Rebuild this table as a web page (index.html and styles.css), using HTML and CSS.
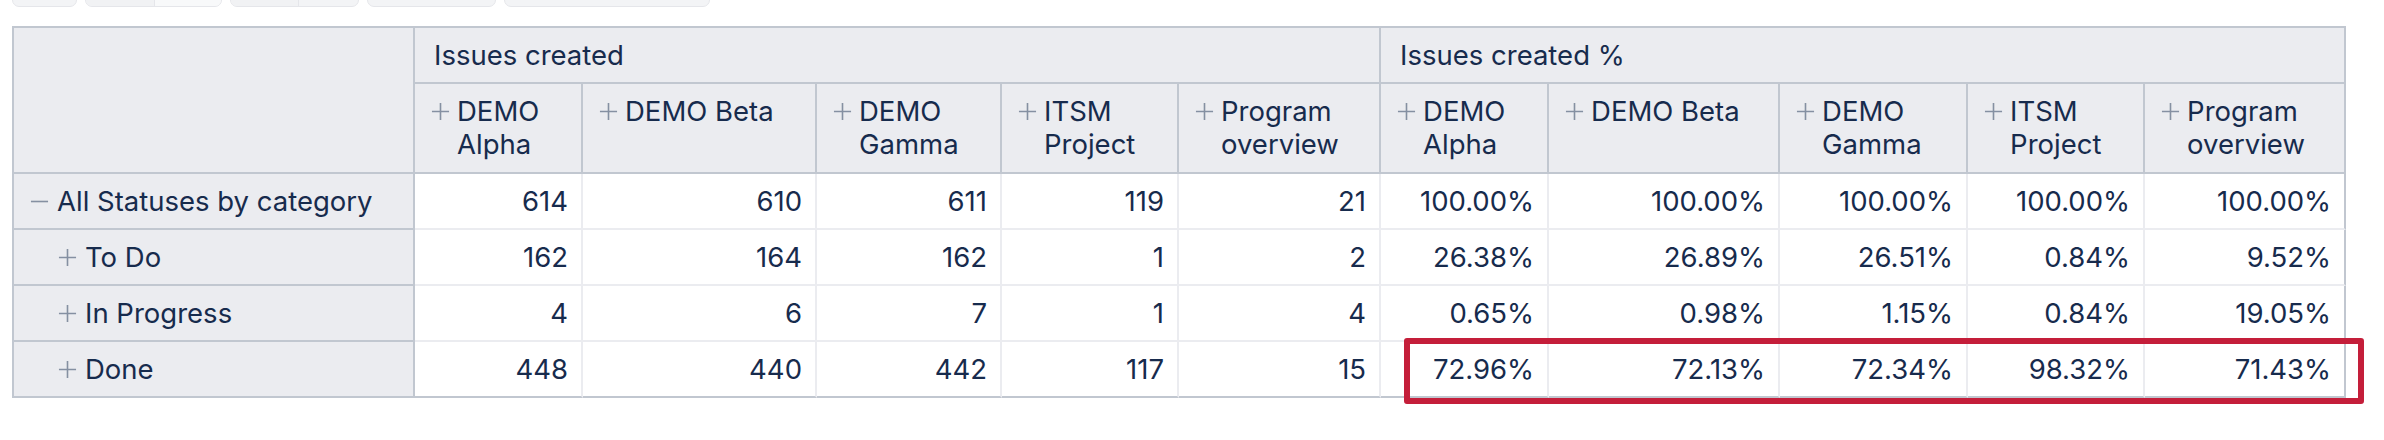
FILE: index.html
```html
<!DOCTYPE html>
<html lang="en">
<head>
<meta charset="utf-8">
<title>Issues created report</title>
<link rel="stylesheet" href="styles.css">
</head>
<body>
<div class="toolbar">
  <div class="btn w1"><span class="seg"></span></div>
  <div class="btn"><span class="seg s68 dark"></span><span class="seg s67 light"></span></div>
  <div class="btn"><span class="seg s67 dark"></span><span class="seg s62"></span></div>
  <div class="btn w4"><span class="seg"></span></div>
  <div class="btn w5"><span class="seg"></span></div>
</div>

<div class="wrap">
  <table class="pivot">
    <colgroup>
      <col class="c401"><col class="c168"><col class="c234"><col class="c185"><col class="c177"><col class="c202">
      <col class="c168"><col class="c231"><col class="c188"><col class="c177"><col class="c201">
    </colgroup>
    <thead>
      <tr class="top">
        <th rowspan="2" class="corner"></th>
        <th colspan="5" class="grp">Issues created</th>
        <th colspan="5" class="grp">Issues created %</th>
      </tr>
      <tr class="sub">
        <th><div class="hd"><span class="ico"><svg viewBox="0 0 20 20"><path d="M1 10H19M10 1V19"/></svg></span><span>DEMO Alpha</span></div></th>
        <th><div class="hd"><span class="ico"><svg viewBox="0 0 20 20"><path d="M1 10H19M10 1V19"/></svg></span><span>DEMO Beta</span></div></th>
        <th><div class="hd"><span class="ico"><svg viewBox="0 0 20 20"><path d="M1 10H19M10 1V19"/></svg></span><span>DEMO Gamma</span></div></th>
        <th><div class="hd"><span class="ico"><svg viewBox="0 0 20 20"><path d="M1 10H19M10 1V19"/></svg></span><span>ITSM Project</span></div></th>
        <th><div class="hd"><span class="ico"><svg viewBox="0 0 20 20"><path d="M1 10H19M10 1V19"/></svg></span><span>Program overview</span></div></th>
        <th><div class="hd"><span class="ico"><svg viewBox="0 0 20 20"><path d="M1 10H19M10 1V19"/></svg></span><span>DEMO Alpha</span></div></th>
        <th><div class="hd"><span class="ico"><svg viewBox="0 0 20 20"><path d="M1 10H19M10 1V19"/></svg></span><span>DEMO Beta</span></div></th>
        <th><div class="hd"><span class="ico"><svg viewBox="0 0 20 20"><path d="M1 10H19M10 1V19"/></svg></span><span>DEMO Gamma</span></div></th>
        <th><div class="hd"><span class="ico"><svg viewBox="0 0 20 20"><path d="M1 10H19M10 1V19"/></svg></span><span>ITSM Project</span></div></th>
        <th><div class="hd"><span class="ico"><svg viewBox="0 0 20 20"><path d="M1 10H19M10 1V19"/></svg></span><span>Program overview</span></div></th>
      </tr>
    </thead>
    <tbody>
      <tr>
        <td class="lbl"><div class="lb"><span class="ico"><svg viewBox="0 0 20 20"><path d="M1 10H19"/></svg></span><span>All Statuses by category</span></div></td>
        <td>614</td><td>610</td><td>611</td><td>119</td><td>21</td>
        <td>100.00%</td><td>100.00%</td><td>100.00%</td><td>100.00%</td><td>100.00%</td>
      </tr>
      <tr>
        <td class="lbl child"><div class="lb"><span class="ico"><svg viewBox="0 0 20 20"><path d="M1 10H19M10 1V19"/></svg></span><span>To Do</span></div></td>
        <td>162</td><td>164</td><td>162</td><td>1</td><td>2</td>
        <td>26.38%</td><td>26.89%</td><td>26.51%</td><td>0.84%</td><td>9.52%</td>
      </tr>
      <tr>
        <td class="lbl child"><div class="lb"><span class="ico"><svg viewBox="0 0 20 20"><path d="M1 10H19M10 1V19"/></svg></span><span>In Progress</span></div></td>
        <td>4</td><td>6</td><td>7</td><td>1</td><td>4</td>
        <td>0.65%</td><td>0.98%</td><td>1.15%</td><td>0.84%</td><td>19.05%</td>
      </tr>
      <tr class="last">
        <td class="lbl child"><div class="lb"><span class="ico"><svg viewBox="0 0 20 20"><path d="M1 10H19M10 1V19"/></svg></span><span>Done</span></div></td>
        <td>448</td><td>440</td><td>442</td><td>117</td><td>15</td>
        <td>72.96%</td><td>72.13%</td><td>72.34%</td><td>98.32%</td><td>71.43%</td>
      </tr>
    </tbody>
  </table>
  <div class="highlight"></div>
</div>
</body>
</html>
```

FILE: styles.css
```css
* { box-sizing: border-box; }

html, body { background: #ffffff; }

body {
  margin: 0;
  padding: 0 0 20px 12px;
  color: #172b4d;
  font-family: Inter, "Noto Sans", "Liberation Sans", sans-serif;
}

/* toolbar (only its bottom edge is visible) */
.toolbar {
  display: flex;
  align-items: flex-end;
  gap: 8px;
  height: 7px;
  overflow: hidden;
}
.btn {
  flex: none;
  display: flex;
  height: 40px;
  border: 1.5px solid #e5e6ea;
  border-radius: 7px;
  background: #f3f4f6;
  overflow: hidden;
}
.w1 { width: 65px; }
.w4 { width: 129px; }
.w5 { width: 206px; }
.seg { display: block; height: 100%; flex: 1; }
.seg + .seg { border-left: 1.5px solid #e5e6ea; }
.s68 { flex: none; width: 68px; }
.s67 { flex: none; width: 67px; }
.s62 { flex: none; width: 60px; }
.dark { background: #f1f2f4; }
.light { background: #f8f9fa; }

/* table */
.wrap {
  position: relative;
  margin-top: 19px;
  padding-bottom: 8px;
  width: 2352px;
}
.pivot {
  width: 2334px;
  table-layout: fixed;
  border-collapse: separate;
  border-spacing: 0;
  border-left: 2px solid #c1c7d0;
  border-top: 2px solid #c1c7d0;
  font-size: 27.5px;
  line-height: 33px;
}
.c401 { width: 401px; }
.c168 { width: 168px; }
.c234 { width: 234px; }
.c185 { width: 185px; }
.c177 { width: 177px; }
.c202 { width: 202px; }
.c231 { width: 231px; }
.c188 { width: 188px; }
.c201 { width: 201px; }

.pivot th,
.pivot td {
  padding: 0;
  border-right: 2px solid #ebecf0;
  border-bottom: 2px solid #ebecf0;
}

.pivot th {
  background: #ebecf0;
  border-color: #c1c7d0;
  font-weight: 400;
  text-align: left;
}
.grp {
  height: 56px;
  padding-left: 19px !important;
  vertical-align: middle;
}
.sub th {
  height: 90px;
  vertical-align: top;
  padding: 11px 10px 0 16px;
}
.hd {
  display: flex;
  align-items: flex-start;
  gap: 7px;
}
.ico {
  flex: none;
  display: flex;
  align-items: center;
  height: 33px;
  width: 19px;
}
.ico svg {
  width: 19px;
  height: 19px;
  fill: none;
  stroke: #8590a2;
  stroke-width: 1.7;
}

.pivot td {
  height: 56px;
  text-align: right;
  vertical-align: middle;
  padding-right: 13px;
}
.pivot td:last-child { border-right-color: #c1c7d0; }
.pivot .last td { border-bottom-color: #c1c7d0; }

.pivot td.lbl {
  background: #ebecf0;
  border-color: #c1c7d0;
  text-align: left;
  padding-left: 16px;
}
.pivot td.child { padding-left: 44px; }
.lb {
  display: flex;
  align-items: center;
  gap: 8px;
}

.highlight {
  position: absolute;
  z-index: 2;
  left: 1392px;
  top: 312px;
  width: 960px;
  height: 66px;
  border: 6px solid #c41e3a;
  border-radius: 3px;
  pointer-events: none;
}
```
